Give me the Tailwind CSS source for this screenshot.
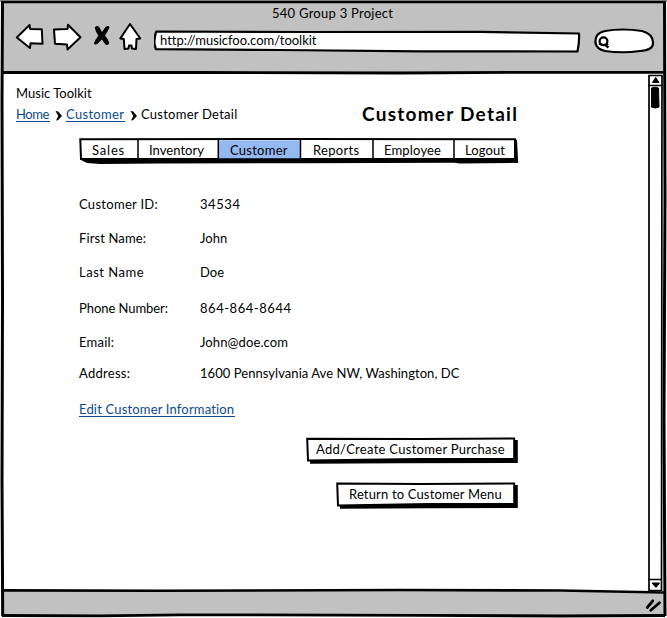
<!DOCTYPE html>
<html lang="en">
<head>
<meta charset="utf-8">
<title>Customer Detail</title>
<script src="https://cdn.jsdelivr.net/npm/@tailwindcss/browser@4"></script>
</head>
<body class="bg-white">
<div class="relative isolate flex h-[618px] w-[667px] flex-col overflow-hidden font-[Lato,'Open_Sans',sans-serif] text-[13px] leading-4 whitespace-nowrap text-black [font-variant-ligatures:none]">

  <!-- Sketched browser frame -->
  <svg class="absolute inset-0 -z-10" width="667" height="618" viewBox="0 0 667 618" fill="none" stroke="#000">
    <path d="M2 2H664V72.500H3Z" fill="#c1c1c1" stroke="none"/>
    <path d="M3 590.500L210 590L500 591L665 592.500V615.500H3Z" fill="#c1c1c1" stroke="none"/>
    <path d="M0 .8H667" stroke="#444" stroke-width="1"/>
    <path d="M1.500 2.200H665" stroke-width="2.200"/>
    <path d="M2.500 1L2 100L2.500 300L2 480L2.700 616" stroke-width="3"/>
    <path d="M664.500 1L665 200L664 420L665 616" stroke-width="3"/>
    <path d="M2 72.500L200 72.500L400 73L520 72.300H665" stroke-width="2.800"/>
    <path d="M3 590.400L160 590.800L400 590L560 590.500L665 592.500" stroke-width="2.600"/>
    <path d="M2 615.500L100 615.800L180 614.800L420 615.300L560 616L665 615.500" stroke-width="2.800"/>
  </svg>

  <header class="h-[73px] shrink-0">
    <h1 class="pt-[5px] pl-[272px] tracking-[0.26px]">540 Group 3 Project</h1>
    <div class="flex pt-px pl-[14px]">
      <svg width="140" height="32" viewBox="14 22 140 32" fill="#fff" stroke="#000" stroke-width="2" stroke-linejoin="round" stroke-linecap="round">
        <path d="M16.800 37.500L29.500 25L30.200 29L41.800 29.300L42.500 43.800L30.500 43.300L30 48Z"/>
        <path d="M54 29.500L67.500 29L68 24.800L80.500 37.300L67.500 49.500L67 44.500L55 43.800Z"/>
        <path d="M130 24L140.300 38.500L136.500 39L136 49L132 48.500L131.500 45.500L129 45.500L128.500 48.500L124.500 49L123.800 39L120.300 38.500Z"/>
        <path d="M94.800 27.500Q97 25 99.200 27L102 32L105.500 27Q108 25 109.600 27.200Q108 31 105 35.500Q108.500 39.500 109.300 43Q108 46 105.500 44.500L101.800 39.500L97.500 43.800Q95 45.500 93.800 43.500Q95 40 98.300 35.700Q95 31 94.800 27.500Z" fill="#000" stroke="none"/>
      </svg>
      <div class="relative h-[32px] w-[430px] pt-[10px] pl-[6px] tracking-[-0.03px]">
        <svg class="absolute top-0 left-0 -z-10" width="430" height="32" viewBox="154 22 430 32" fill="#fff" stroke="#000" stroke-width="2.200" stroke-linejoin="round">
          <path d="M156.500 31.500L300 32L480 31.800L579 33.500Q579.500 42 577.500 51.500L420 51.300L280 50L156 49.200Q153.500 44 154.800 38Q155.300 33 156.500 31.500Z"/>
        </svg>
        http://musicfoo.com/toolkit
      </div>
      <svg width="76" height="32" viewBox="584 22 76 32" fill="#fff" stroke="#000" stroke-width="2.200">
        <path d="M595.500 43Q594.500 33 605 31Q622 28 642 31Q653.500 34 653 43.500Q653 50 640 51Q622 53.500 605 51Q596.500 49 595.500 43Z"/>
        <circle cx="603.500" cy="41.200" r="3.900"/>
        <path d="M599 43.500Q604 46.500 608 43.500M604.500 44.500L608.500 47.500"/>
      </svg>
    </div>
  </header>

  <div class="flex min-h-0 flex-1">
    <main class="w-[647px] pt-[12px] pl-4">
      <p class="tracking-[0.02px]">Music Toolkit</p>
      <div class="flex w-[504px] pt-[2px]">
        <nav class="flex h-[23px] items-start pt-[3px]">
          <a class="h-[16px] w-[34px] border-b border-[#0b4a8f] tracking-[-0.45px] text-[#0b4a8f]">Home</a>
          <svg class="mt-[4px] mr-[3px] ml-[4px]" width="9" height="12" viewBox="0 0 9 12"><path d="M1.500 1Q4 .5 5.500 3L8 6L5.500 8.500Q4 11 2 10.500L4.300 6Z"/></svg>
          <a class="h-[16px] w-[59px] border-b border-[#0b4a8f] tracking-[0.32px] text-[#0b4a8f]">Customer</a>
          <svg class="mt-[4px] mr-[3px] ml-[4px]" width="9" height="12" viewBox="0 0 9 12"><path d="M1.500 1Q4 .5 5.500 3L8 6L5.500 8.500Q4 11 2 10.500L4.300 6Z"/></svg>
          <span class="tracking-[0.25px]">Customer Detail</span>
        </nav>
        <h2 class="ml-auto w-[158px] text-[19px] leading-[22px] font-bold tracking-[1.25px]">Customer Detail</h2>
      </div>

      <!-- Section tabs -->
      <nav class="relative mt-[12px] ml-[63px] flex h-[27px] w-[440px] pt-[4px] pl-[13px]">
        <svg class="absolute top-0 left-0 -z-10" width="440" height="27" viewBox="79 138 440 27" fill="#fff" stroke="#000">
          <path d="M80.300 139.300L300 139L515 139.300V159H81Z" stroke-width="2"/>
          <path d="M219 140.300H300V158.500H219Z" fill="#94b9f1" stroke="none"/>
          <path d="M138 139V160M218.300 139V160M300.500 139V160M373 139V160M454 139V160" stroke-width="1.500"/>
          <path d="M80 158.500L516.500 158.500L518 162.800L460 163.500L454 162.800L300 163.300L160 163.500L100 164L87 163L81 160Z" fill="#000" stroke="none"/>
          <path d="M514 139L517 140L518.200 162.800H515Z" fill="#000" stroke="none"/>
        </svg>
        <a class="w-[57px] tracking-[0.8px]">Sales</a>
        <a class="w-[81px] tracking-[0.04px]">Inventory</a>
        <a class="w-[83px] tracking-[0.25px]">Customer</a>
        <a class="w-[71px] tracking-[0.29px]">Reports</a>
        <a class="w-[81px] tracking-[0.17px]">Employee</a>
        <a class="tracking-[0.11px]">Logout</a>
      </nav>

      <dl class="mt-[31px] ml-[63px] grid grid-cols-[121px_auto] grid-rows-[34px_34px_36px_34px_31px_36px]">
        <dt class="tracking-[0.29px]">Customer ID:</dt><dd class="tracking-[0.57px]">34534</dd>
        <dt class="tracking-[0.12px]">First Name:</dt><dd>John</dd>
        <dt class="tracking-[0.5px]">Last Name</dt><dd>Doe</dd>
        <dt class="tracking-[-0.06px]">Phone Number:</dt><dd class="tracking-[0.54px]">864-864-8644</dd>
        <dt class="tracking-[0.22px]">Email:</dt><dd class="tracking-[0.11px]">John@doe.com</dd>
        <dt class="tracking-[0.28px]">Address:</dt><dd class="tracking-[0.05px]">1600 Pennsylvania Ave NW, Washington, DC</dd>
      </dl>
      <a class="ml-[63px] block h-[16px] w-[156px] border-b border-[#0b4a8f] tracking-[0.17px] text-[#0b4a8f]">Edit Customer Information</a>

      <div class="mt-[20px] flex w-[504px] flex-col items-end gap-[18px]">
        <button class="relative h-[27px] w-[214px] pb-[3px] pl-[10px] text-left tracking-[0.29px]">
          <svg class="absolute top-0 left-0 -z-10" width="214" height="27" viewBox="306 437 214 27">
            <path d="M310 440H517.800V463L400 463.300L310 463.800Z"/>
            <path d="M307.200 438.800L420 439L514.200 438.500V459L420 459L308 460.500Z" fill="#fff" stroke="#000" stroke-width="2"/>
          </svg>
          Add/Create Customer Purchase
        </button>
        <button class="relative h-[27px] w-[184px] pb-[3px] pl-[13px] text-left tracking-[0.16px]">
          <svg class="absolute top-0 left-0 -z-10" width="184" height="27" viewBox="336 482 184 27">
            <path d="M340 485H517.800V508L430 508.300L340 508.800Z"/>
            <path d="M337.200 483.500L420 484L514.200 483.500V504L430 504L338 505.500Z" fill="#fff" stroke="#000" stroke-width="2"/>
          </svg>
          Return to Customer Menu
        </button>
      </div>
    </main>

    <!-- Scrollbar -->
    <svg width="17" height="518" viewBox="647 73 17 518" fill="#fff" stroke="#000" stroke-width="1.700">
      <path d="M649 75.500H662L661.500 590.500H649Z"/>
      <path d="M648 85.500H662M648.500 579.500H662"/>
      <path d="M655.700 77.500L659 82.500H652.500Z M652 583H659.500L656 587.500Z" fill="#000" stroke-width="1"/>
      <path d="M651.500 88Q655 86.500 658.500 88L659 107Q655 109 651.500 107Z" fill="#000" stroke-width="1"/>
    </svg>
  </div>

  <footer class="flex h-[27px] shrink-0 justify-end pt-[6px] pr-[4px]">
    <svg width="18" height="17" viewBox="645 597 18 17" fill="none" stroke="#000" stroke-width="2.800" stroke-linecap="round">
      <path d="M647.200 607.500L652.800 600.800M650.800 610.300L659.500 602.800"/>
    </svg>
  </footer>
</div>
</body>
</html>
